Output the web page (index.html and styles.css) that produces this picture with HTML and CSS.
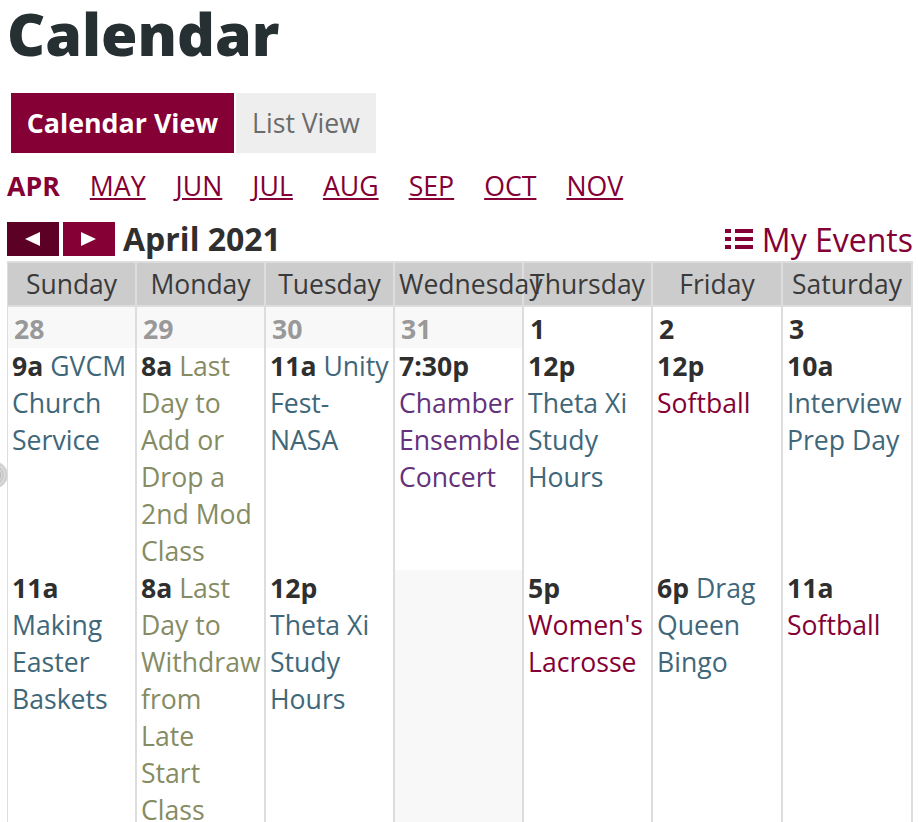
FILE: index.html
```html
<!DOCTYPE html>
<html lang="en">
<head>
<meta charset="utf-8">
<title>Calendar</title>
<link rel="stylesheet" href="styles.css">
</head>
<body>
<h1>Calendar</h1>
<nav class="tabs"><a class="tab active">Calendar View</a><a class="tab">List View</a></nav>
<nav class="months"><b>APR</b><a>MAY</a><a>JUN</a><a>JUL</a><a>AUG</a><a>SEP</a><a>OCT</a><a>NOV</a></nav>
<header class="toolbar">
  <button class="arrow dark" aria-label="Previous"><svg width="15" height="14" viewBox="0 0 15 14"><path d="M15 0V14L0 7Z"/></svg></button>
  <button class="arrow" aria-label="Next"><svg width="15" height="14" viewBox="0 0 15 14"><path d="M0 0V14L15 7Z"/></svg></button>
  <h2>April 2021</h2>
  <a class="mine"><svg width="28" height="21" viewBox="0 0 28 21"><path d="M0 0h6v4H0zM10 0h18v4H10zM0 8h6v4H0zM10 8h18v4H10zM0 16h6v4H0zM10 16h18v4H10z"/></svg><span>My Events</span></a>
</header>
<table>
<colgroup><col><col><col><col><col><col class="wide"><col class="wide"></colgroup>
<thead><tr><th>Sunday</th><th>Monday</th><th>Tuesday</th><th>Wednesday</th><th>Thursday</th><th>Friday</th><th>Saturday</th></tr></thead>
<tbody>
<tr class="dates"><td class="other">28</td><td class="other">29</td><td class="other">30</td><td class="other">31</td><td>1</td><td>2</td><td>3</td></tr>
<tr class="first">
<td><b>9a</b> <a class="teal">GVCM Church Service</a></td>
<td><b>8a</b> <a class="olive">Last Day to Add or Drop a 2nd Mod Class</a></td>
<td><b>11a</b> <a class="teal">Unity Fest-NASA</a></td>
<td><b>7:30p</b> <a class="purple">Chamber Ensemble Concert</a></td>
<td><b>12p</b><br><a class="teal">Theta Xi Study Hours</a></td>
<td><b>12p</b> <a class="red">Softball</a></td>
<td><b>10a</b> <a class="teal">Interview Prep Day</a></td></tr>
<tr class="second">
<td><b>11a</b> <a class="teal">Making Easter Baskets</a></td>
<td><b>8a</b> <a class="olive">Last Day to Withdraw from<br>Late<br>Start Class</a></td>
<td><b>12p</b><br><a class="teal">Theta Xi Study Hours</a></td>
<td class="empty"></td>
<td><b>5p</b> <a class="red">Women's Lacrosse</a></td>
<td><b>6p</b> <a class="teal">Drag Queen Bingo</a></td>
<td><b>11a</b> <a class="red">Softball</a></td></tr>
</tbody>
</table>
<span class="handle"></span>
</body>
</html>
```
FILE: styles.css
```css
* { box-sizing: border-box; }
html { overflow: hidden; }
body { margin: 0; width: 918px; height: 822px; overflow: hidden; padding-left: 7px; position: relative; font: 26.6px/37px "Open Sans", sans-serif; color: #2f2f2f; background: #fff; }
h1 { margin: 0; height: 93px; font-size: 59px; line-height: 67px; font-weight: 800; color: #263032; }
.tabs { display: flex; gap: 2px; margin-left: 4px; height: 60px; }
.tab { background: #eee; color: #6b6b6b; line-height: 60px; width: 140px; text-align: center; }
.active { background: #840035; color: #fff; font-weight: 700; width: 223px; font-size: 26.8px; }
.months { display: flex; gap: 30px; height: 69px; padding-top: 14px; color: #840035; font-size: 26.7px; }
.months a { text-decoration: underline; text-decoration-thickness: 2px; text-underline-offset: 2px; }
.toolbar { display: flex; height: 34px; margin-right: 5px; gap: 4px; }
.arrow { border: 0; padding: 0 1px 0 0; width: 52px; height: 34px; background: #840035; display: flex; align-items: center; justify-content: center; }
.arrow svg { fill: #fff; }
.dark { background: #5c0026; }
h2 { font-size: 32px; line-height: 34px; margin: 0 0 0 4px; white-space: nowrap; }
.mine { margin-left: auto; display: flex; gap: 9px; color: #840035; font-size: 32px; line-height: 35px; white-space: nowrap; }
.mine svg { fill: #840035; margin-top: 7px; }
table { table-layout: fixed; width: 906px; border-collapse: separate; border-spacing: 0; border-left: 1px solid #ddd; margin: 5px 0 0; }
col { width: 129px; }
.wide { width: 130px; }
th { background: #ccc; border: solid #ddd; border-width: 2px 2px 2px 0; font-weight: 400; height: 46px; padding: 0 4px; line-height: 40px; white-space: nowrap; color: #3a3a3a; font-size: 26.5px; }
td { border-right: 2px solid #ddd; padding: 0 0 0 4px; vertical-align: top; }
.dates td { height: 41px; font-weight: 700; padding: 4px 0 0 6px; }
.dates .other { color: #999; background: #f8f8f8; }
.first td { height: 222px; }
.second td { height: 259px; }
.empty { background: #f8f8f8; }
.teal { color: #406779; }
.olive { color: #858b63; }
.purple { color: #64317b; }
.red { color: #840035; }
.handle { position: absolute; left: -20px; top: 461px; width: 28px; height: 28px; border: 1px solid #ddd; border-radius: 50%; background: radial-gradient(circle closest-side, #bbb 50%, #d8d8d8 60%, #c4c4c4 70%, #ddd 80%, #c8c8c8 100%); }
```
